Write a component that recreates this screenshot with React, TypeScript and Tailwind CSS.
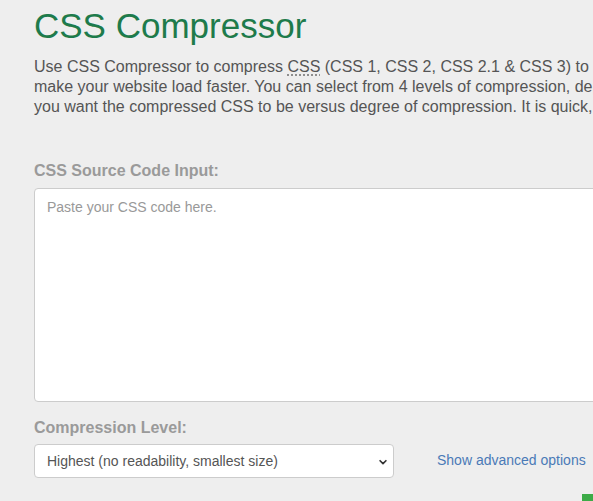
import React from "react";

export default function App() {
  return (
    <div className="min-h-[501px] w-full overflow-hidden bg-[#eeeeee] font-['Liberation_Sans',Arial,sans-serif]">
      <div className="w-[640px] pl-[34px]">
        <h1 className="pt-[6px] text-[35px] leading-[40px] font-normal text-[#1e7b4b]">
          CSS Compressor
        </h1>
        <p className="mt-[11px] whitespace-nowrap text-[16px] leading-[20px] text-[#555555]">
          Use CSS Compressor to compress{" "}
          <abbr
            title="Cascading Style Sheets"
            className="cursor-help underline decoration-dotted decoration-[#777] underline-offset-[3px]"
          >
            CSS
          </abbr>{" "}
          (CSS 1, CSS 2, CSS 2.1 &amp; CSS 3) to
          <br />
          make your website load faster. You can select from 4 levels of compression, depending on how legible
          <br />
          you want the compressed CSS to be versus degree of compression. It is quick, easy and free!
        </p>

        <label className="mt-[44px] block text-[16px] leading-[20px] font-bold text-[#9a9a9a]">
          CSS Source Code Input:
        </label>
        <textarea
          placeholder="Paste your CSS code here."
          className="mt-[7px] block h-[214px] w-[620px] resize-none rounded-[4px] border border-[#cccccc] bg-white px-[12px] py-[8px] text-[14px] leading-[20px] text-[#555] placeholder:text-[#999999] focus:outline-none"
        />

        <label className="mt-[16px] block text-[16px] leading-[20px] font-bold text-[#9a9a9a]">
          Compression Level:
        </label>
        <div className="mt-[6px] flex items-center">
          <div className="relative w-[360px]">
            <select
              defaultValue="highest"
              className="block h-[34px] w-full appearance-none rounded-[4px] border border-[#cccccc] bg-white pl-[12px] text-[14px] text-[#555555] focus:outline-none"
            >
              <option value="highest">Highest (no readability, smallest size)</option>
              <option value="high">High (moderate readability, smaller size)</option>
              <option value="standard">Standard (balance between readability and size)</option>
              <option value="low">Low (higher readability)</option>
            </select>
            <svg
              viewBox="0 0 12 12"
              className="pointer-events-none absolute top-[13px] right-[6px] h-[10px] w-[10px]"
              aria-hidden
            >
              <path
                d="M2.5 4.5L6 8L9.5 4.5"
                stroke="#333"
                strokeWidth="2"
                fill="none"
                strokeLinecap="round"
                strokeLinejoin="round"
              />
            </svg>
          </div>
          <a href="#" className="-mt-[2px] ml-[43px] text-[14px] leading-[20px] text-[#4a7ab7]">
            Show advanced options
          </a>
        </div>
        <div className="mt-[16px] ml-[548px] h-[20px] w-[40px] bg-[#3cab47]" />
      </div>
    </div>
  );
}
